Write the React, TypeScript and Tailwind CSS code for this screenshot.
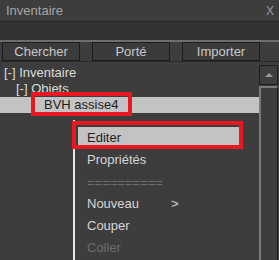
import React from 'react';

const font = { fontFamily: '"Liberation Sans", Arial, sans-serif' };

function TabButton({ label }: { label: string }) {
  return (
    <div className="h-[19px] w-[78px] border border-[#1c1c1c] bg-[#3b3b3b] text-[13px] leading-[17px] text-[#c8c8c8] text-center">
      {label}
    </div>
  );
}

function MenuItem({ label, active, dim, arrow }: { label: string; active?: boolean; dim?: boolean; arrow?: boolean }) {
  return (
    <div
      className={
        'h-[22px] mx-[3px] pl-[9px] flex items-center text-[13px] ' +
        (active ? 'bg-[#c3c3c3] text-[#1e1e1e]' : dim ? 'text-[#6c6c6c]' : 'text-[#d6d6d6]')
      }
    >
      <span className="w-[84px]">{label}</span>
      {arrow && <span className="text-[#cfcfcf]">&gt;</span>}
    </div>
  );
}

export default function App() {
  return (
    <div className="relative w-[279px] h-[260px] overflow-hidden bg-[#3d3d3d] select-none" style={font}>
      {/* title bar */}
      <div className="h-[22px] flex items-center justify-between pl-[6px] pr-[5px] border-b border-[#262626] text-[13px] text-[#a6a6a6]">
        <span>Inventaire</span>
        <span className="text-[12px] text-[#9a9a9a]">X</span>
      </div>
      <div className="h-[18px] bg-[#333333]" />

      {/* tabs */}
      <div className="border-t-2 border-[#6e6e6e] flex pl-[2px] gap-[12px]">
        <TabButton label="Chercher" />
        <TabButton label="Porté" />
        <TabButton label="Importer" />
      </div>

      {/* tree + scrollbar */}
      <div className="flex border-t border-[#2a2a2a]">
        <div className="w-[259px] pt-[3px] text-[13px] text-[#dcdcdc]">
          <div className="h-[16px] leading-[16px] pl-[4px]">[-] Inventaire</div>
          <div className="h-[16px] leading-[16px] pl-[16px]">[-] Obiets</div>
          <div className="h-[16px] leading-[16px] pl-[44px] bg-[#c3c3c3] text-[#1e1e1e]">BVH assise4</div>
        </div>
        <div className="w-[20px] pt-[3px] flex flex-col">
          <div className="w-[19px] h-[20px] border border-[#1e1e1e] bg-[#3d3d3d] flex items-center justify-center">
            <div className="w-0 h-0 border-l-[4px] border-r-[4px] border-b-[4px] border-l-transparent border-r-transparent border-b-[#9a9a9a]" />
          </div>
          <div className="w-[19px] h-[200px] mt-[1px] border-l-2 border-t-2 border-[#7a7a7a] border-r border-r-[#1e1e1e] bg-[#3d3d3d]" />
        </div>
      </div>

      {/* context menu */}
      <div className="absolute left-[73px] top-[120px] w-[172px] h-[150px] bg-[#3d3d3d] border-l-2 border-[#e6e6e6] pt-[7px]">
        <MenuItem label="Editer" active />
        <MenuItem label="Propriétés" />
        <div className="h-[22px] mx-[3px] pl-[9px] flex items-center text-[13px] leading-none text-[#6e6e6e]">==========</div>
        <MenuItem label="Nouveau" arrow />
        <MenuItem label="Couper" />
        <MenuItem label="Coller" dim />
      </div>

      {/* red annotation boxes */}
      <div className="absolute left-[31px] top-[92px] w-[101px] h-[24px] border-[4px] border-[#e81820]" />
      <div className="absolute left-[72px] top-[121px] w-[171px] h-[28px] border-[4px] border-[#e81820]" />
    </div>
  );
}
